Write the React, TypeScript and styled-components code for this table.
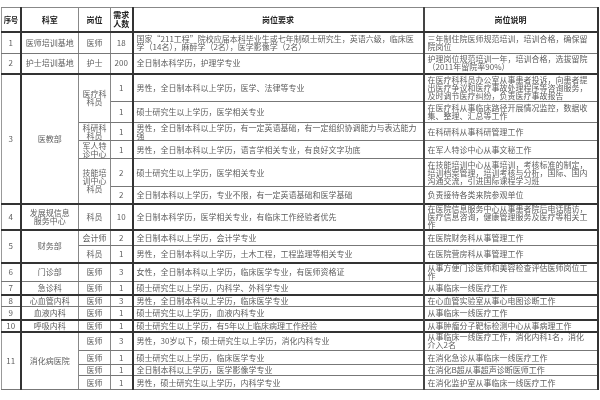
import React from "react";
import styled, { createGlobalStyle } from "styled-components";

const Global = createGlobalStyle`
  html, body { margin: 0; padding: 0; background: #fff; }
  body { font-family: "Noto Sans CJK SC", "Liberation Sans", sans-serif; }
`;

type Col = "no" | "dept" | "post" | "num" | "req" | "desc";

const Page = styled.div`
  width: 600px;
  height: 400px;
  padding: 7px 0 0 1px;
  box-sizing: border-box;
  overflow: hidden;
  background: #fff;
`;

const Table = styled.table`
  width: 596px;
  table-layout: fixed;
  border-collapse: collapse;
  font-size: 8px;
  line-height: 8px;
  color: #5e5e5e;
  filter: blur(0.35px);
`;

const Tr = styled.tr<{ $h: number }>`
  height: ${(p) => p.$h}px;
`;

const rightBorder: Record<Col, string> = {
  no: "2px solid #333",
  dept: "1px solid #888",
  post: "1px solid #888",
  num: "2px solid #333",
  req: "2px solid #444",
  desc: "2px solid #333",
};

const pad: Record<Col, string> = {
  no: "0 1px",
  dept: "0 1px",
  post: "0 1px",
  num: "0 1px",
  req: "0 3px",
  desc: "0 8px 0 3px",
};

const Cell = styled.td<{ $col: Col; $top?: string }>`
  padding: ${(p) => pad[p.$col]};
  text-align: ${(p) => (p.$col === "req" || p.$col === "desc" ? "left" : "center")};
  vertical-align: middle;
  border-left: ${(p) => (p.$col === "no" ? "1px solid #999" : "none")};
  border-right: ${(p) => rightBorder[p.$col]};
  border-top: ${(p) => p.$top ?? "1px solid #777"};
  border-bottom: 1px solid #777;
  overflow: hidden;
  word-break: break-all;
`;

const Head = styled.th<{ $col: Col }>`
  padding: 0;
  text-align: center;
  vertical-align: middle;
  font-weight: 700;
  font-size: ${(p) => (p.$col === "no" ? "7.5px" : "8px")};
  letter-spacing: ${(p) => (p.$col === "no" ? "-0.5px" : "0")};
  white-space: ${(p) => (p.$col === "no" ? "nowrap" : "normal")};
  line-height: 9px;
  color: #222;
  border-left: ${(p) => (p.$col === "no" ? "1px solid #999" : "none")};
  border-right: ${(p) => rightBorder[p.$col]};
  border-top: 1px solid #888;
  border-bottom: 2px solid #333;
  word-break: break-all;
`;

type Sub = {
  post?: React.ReactNode;
  postSpan?: number;
  num: string;
  req: string;
  desc: string;
  h: number;
};
type Group = { no: string; dept: React.ReactNode; subs: Sub[]; thick?: boolean };

const groups: Group[] = [
  {
    no: "1",
    dept: "医师培训基地",
    subs: [
      {
        post: "医师",
        num: "18",
        req: "国家“211工程”院校应届本科毕业生或七年制硕士研究生，英语六级，临床医学（14名），麻醉学（2名），医学影像学（2名）",
        desc: "三年制住院医师规范培训，培训合格，确保留院岗位",
        h: 22,
      },
    ],
  },
  {
    no: "2",
    dept: "护士培训基地",
    subs: [
      {
        post: "护士",
        num: "200",
        req: "全日制本科学历，护理学专业",
        desc: "护理岗位规范培训一年，培训合格，选拔留院（2011年留院率90%）",
        h: 20,
      },
    ],
  },
  {
    no: "3",
    dept: "医教部",
    thick: true,
    subs: [
      {
        post: "医疗科科员",
        postSpan: 2,
        num: "1",
        req: "男性，全日制本科以上学历，医学、法律等专业",
        desc: "在医疗科科员办公室从事患者投诉，向患者提出医疗争议和医疗事故处理程序等咨询服务，及时调节医疗纠纷，负责医疗事故报告",
        h: 28,
      },
      {
        num: "1",
        req: "硕士研究生以上学历，医学相关专业",
        desc: "在医疗科从事临床路径开展情况监控，数据收集、整理、汇总等工作",
        h: 21,
      },
      {
        post: "科研科科员",
        num: "1",
        req: "男性，全日制本科以上学历，有一定英语基础，有一定组织协调能力与表达能力强",
        desc: "在科研科从事科研管理工作",
        h: 18,
      },
      {
        post: "军人特诊中心",
        num: "1",
        req: "男性，全日制本科以上学历，语言学相关专业，有良好文字功底",
        desc: "在军人特诊中心从事文秘工作",
        h: 18,
      },
      {
        post: "技能培训中心科员",
        postSpan: 2,
        num: "2",
        req: "硕士研究生以上学历，医学相关专业",
        desc: "在技能培训中心从事培训，考核标准的制定，培训档案管理，培训考核与分析，国际、国内沟通交流，引进国际课程学习班",
        h: 28,
      },
      {
        num: "2",
        req: "全日制本科以上学历，专业不限，有一定英语基础和医学基础",
        desc: "负责接待各类来院参观单位",
        h: 17,
      },
    ],
  },
  {
    no: "4",
    dept: (
      <>
        发展规信息
        <br />
        服务中心
      </>
    ),
    thick: true,
    subs: [
      {
        post: "科员",
        num: "10",
        req: "全日制本科学历，医学相关专业，有临床工作经验者优先",
        desc: "在医院信息服务中心从事患者院后电话随访，医疗信息咨询，健康管理服务及医疗等相关工作",
        h: 22,
      },
    ],
  },
  {
    no: "5",
    dept: "财务部",
    thick: true,
    subs: [
      {
        post: "会计师",
        num: "2",
        req: "全日制本科以上学历，会计学专业",
        desc: "在医院财务科从事管理工作",
        h: 16,
      },
      {
        post: "科员",
        num: "1",
        req: "男性，全日制本科以上学历，土木工程，工程监理等相关专业",
        desc: "在医院营房科从事管理工作",
        h: 17,
      },
    ],
  },
  {
    no: "6",
    dept: "门诊部",
    thick: true,
    subs: [
      {
        post: "医师",
        num: "3",
        req: "女性，全日制本科以上学历，临床医学专业，有医师资格证",
        desc: "从事方便门诊医师和美容检查评估医师岗位工作",
        h: 19,
      },
    ],
  },
  {
    no: "7",
    dept: "急诊科",
    subs: [
      {
        post: "医师",
        num: "1",
        req: "硕士研究生以上学历，内科学、外科学专业",
        desc: "从事临床一线医疗工作",
        h: 13,
      },
    ],
  },
  {
    no: "8",
    dept: "心血管内科",
    thick: true,
    subs: [
      {
        post: "医师",
        num: "3",
        req: "男性，全日制本科以上学历，临床医学专业",
        desc: "在心血管实验室从事心电图诊断工作",
        h: 12,
      },
    ],
  },
  {
    no: "9",
    dept: "血液内科",
    subs: [
      {
        post: "医师",
        num: "1",
        req: "硕士研究生以上学历，血液内科专业",
        desc: "从事临床一线医疗工作",
        h: 13,
      },
    ],
  },
  {
    no: "10",
    dept: "呼吸内科",
    thick: true,
    subs: [
      {
        post: "医师",
        num: "1",
        req: "硕士研究生以上学历，有5年以上临床病理工作经验",
        desc: "从事肿瘤分子靶标检测中心从事病理工作",
        h: 12,
      },
    ],
  },
  {
    no: "11",
    dept: "消化病医院",
    thick: true,
    subs: [
      {
        post: "医师",
        num: "3",
        req: "男性，30岁以下，硕士研究生以上学历，消化内科专业",
        desc: "从事临床一线医疗工作，消化内科1名，消化介入2名",
        h: 19,
      },
      {
        post: "医师",
        num: "1",
        req: "硕士研究生以上学历，临床医学专业",
        desc: "在消化急诊从事临床一线医疗工作",
        h: 14,
      },
      {
        post: "医师",
        num: "1",
        req: "全日制本科以上学历，医学影像学专业",
        desc: "在消化B超从事超声诊断医师工作",
        h: 11,
      },
      {
        post: "医师",
        num: "1",
        req: "男性，硕士研究生以上学历，内科学专业",
        desc: "在消化监护室从事临床一线医疗工作",
        h: 14,
      },
    ],
  },
];

const widths = [19, 58, 32, 22, 291, 174];

export default function App() {
  return (
    <Page>
      <Global />
      <Table>
        <colgroup>
          {widths.map((w, i) => (
            <col key={i} style={{ width: w }} />
          ))}
        </colgroup>
        <thead>
          <Tr $h={24}>
            <Head $col="no">序号</Head>
            <Head $col="dept">科室</Head>
            <Head $col="post">岗位</Head>
            <Head $col="num">需求人数</Head>
            <Head $col="req">岗位要求</Head>
            <Head $col="desc">岗位说明</Head>
          </Tr>
        </thead>
        <tbody>
          {groups.map((g) =>
            g.subs.map((s, i) => {
              const top = i === 0 && g.thick ? "2px solid #333" : undefined;
              return (
                <Tr $h={s.h} key={g.no + "-" + i}>
                  {i === 0 && (
                    <>
                      <Cell $col="no" $top={top} rowSpan={g.subs.length}>
                        {g.no}
                      </Cell>
                      <Cell $col="dept" $top={top} rowSpan={g.subs.length}>
                        {g.dept}
                      </Cell>
                    </>
                  )}
                  {s.post !== undefined && (
                    <Cell $col="post" $top={top} rowSpan={s.postSpan ?? 1}>
                      {s.post}
                    </Cell>
                  )}
                  <Cell $col="num" $top={top}>{s.num}</Cell>
                  <Cell $col="req" $top={top}>{s.req}</Cell>
                  <Cell $col="desc" $top={top}>{s.desc}</Cell>
                </Tr>
              );
            })
          )}
        </tbody>
      </Table>
    </Page>
  );
}
